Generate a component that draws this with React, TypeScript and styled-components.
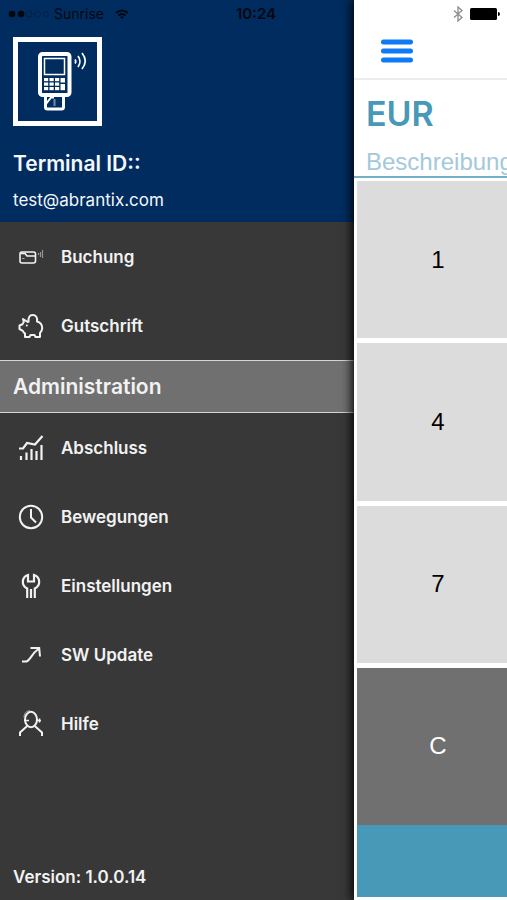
import React from "react";
import styled, { createGlobalStyle } from "styled-components";

const GlobalStyle = createGlobalStyle`
  *, *::before, *::after { box-sizing: border-box; }
  body { margin: 0; background: #ffffff; font-family: Inter, "Liberation Sans", sans-serif; }
  button, input { font: inherit; border: 0; border-radius: 0; margin: 0; padding: 0; }
  h1, h2, p, ul { margin: 0; padding: 0; }
  ul { list-style: none; }
`;

const Screen = styled.div`
  display: grid;
  grid-template-columns: minmax(0, 1fr) 153px;
  min-height: 100vh;
  overflow: hidden;
`;

const Drawer = styled.aside`
  display: flex;
  flex-direction: column;
  background: #383838;
  color: #f2f2f2;
`;

const Profile = styled.header`
  height: 222px;
  padding: 0 13px;
  background: #002c5f;
  color: #f4f7fb;
`;

const Status = styled.div`
  display: flex;
  align-items: center;
  height: 27px;
  color: #05080e;
  font-size: 14px;
`;

const Carrier = styled(Status)`
  justify-content: space-between;
  margin: 0 65px 10px -5px;
`;

const Signal = styled.span`
  display: flex;
  align-items: center;
  gap: 5px;
`;

const Time = styled.time`
  font-size: 15px;
  font-weight: 600;
`;

const Logo = styled.svg`
  display: block;
  width: 89px;
  height: 89px;
`;

const Terminal = styled.h1`
  margin-top: 24px;
  font-size: 21px;
  line-height: 28px;
  font-weight: 600;
`;

const Email = styled.p`
  margin-top: 10px;
  font-size: 17px;
  line-height: 24px;
`;

const Item = styled.button`
  display: flex;
  align-items: center;
  gap: 16px;
  width: 100%;
  height: 69px;
  padding: 0 17px;
  background: transparent;
  color: inherit;
  font-size: 17px;
  font-weight: 600;
  text-align: left;
  cursor: pointer;
`;

const Icon = styled.svg`
  flex: none;
  width: 28px;
  height: 28px;
  fill: none;
  stroke: currentColor;
  stroke-width: 2;
`;

const Section = styled.h2`
  height: 53px;
  padding: 0 13px;
  border: solid #d4d4d4;
  border-width: 1px 0;
  background: #707070;
  font-size: 21px;
  line-height: 51px;
  font-weight: 600;
`;

const Version = styled.p`
  margin-top: auto;
  padding: 0 13px 11px;
  font-size: 17px;
  line-height: 24px;
  font-weight: 600;
`;

const Main = styled.main`
  display: flex;
  flex-direction: column;
  min-width: 0;
  background: #ffffff;
  box-shadow: -1px 0 10px 1px #000000;
  z-index: 1;
`;

const DeviceStatus = styled(Status)`
  justify-content: flex-end;
  gap: 7px;
  padding-right: 7px;
`;

const TopBar = styled.div`
  height: 53px;
  padding: 11px 26px;
  border-bottom: 2px solid #ececec;
`;

const MenuButton = styled.button`
  display: block;
  background: transparent;
  cursor: pointer;

  svg { display: block; width: 34px; height: 26px; }
`;

const Amount = styled.div`
  padding: 12px 12px 0;
  color: #4799b7;
  font-size: 34px;
  line-height: 44px;
  font-weight: 600;
`;

const Description = styled.input`
  width: 100%;
  height: 42px;
  padding: 12px 0 0 12px;
  border-bottom: 2px solid #78afc8;
  background: transparent;
  font-family: "Liberation Sans", sans-serif;
  font-size: 24px;
  outline: 0;
  border-radius: 0;

  &::placeholder { color: #a3c9da; opacity: 1; }
`;

const Keypad = styled.div`
  display: grid;
  grid-template-columns: 162px;
  grid-template-rows: repeat(4, 1fr);
  gap: 5px;
  flex: 1;
  padding: 3px 0 0 3px;
  overflow: hidden;
`;

const Key = styled.button<{ $dark?: boolean }>`
  background: ${({ $dark }) => ($dark ? "#707070" : "#dcdcdc")};
  color: ${({ $dark }) => ($dark ? "#ffffff" : "#000000")};
  font-family: "Liberation Sans", sans-serif;
  font-size: 24px;
  cursor: pointer;
`;

const Confirm = styled.button`
  height: 72px;
  margin: 0 0 3px 3px;
  background: #4898b7;
  cursor: pointer;
`;

type Entry = { label: string; icon: React.ReactNode };

const bookings: Entry[] = [
  {
    label: "Buchung",
    icon: (
      <>
        <rect x="3" y="9" width="15.500" height="11" rx="2" strokeWidth="1.600" />
        <path d="M4 10.500h4l2 2.500h8" strokeWidth="1.600" />
        <path d="M5 15.500h2.500" strokeWidth="1" opacity=".6" />
        <path d="M21.500 10v2M23.500 9v5M25.500 7v8" strokeWidth="1.200" opacity=".5" />
      </>
    ),
  },
  {
    label: "Gutschrift",
    icon: (
      <>
        <path
          d="M11.500 10.500C11 5.500 12.500 3 15.700 3s5 2.500 4.300 6.500c3.500 1 5.200 3.500 5.200 6.500 0 2.500-1 4-2.200 5v4h-4.500l-1-2h-4l-1 2H8v-3.500c-1.200-.6-1.800-1.500-2.200-2.700L2.500 17v-3.500l3-1.200c.3-1 .7-1.600 1.300-2.200L6 7l5.500 3.500"
          strokeLinejoin="round"
        />
        <circle cx="9.800" cy="13.500" r="1" fill="currentColor" stroke="none" />
      </>
    ),
  },
];

const administration: Entry[] = [
  {
    label: "Abschluss",
    icon: <path d="M2 14.500h4l4-5.500 8 1.500 7.500-8.500M4 22v4M9.500 18.500V26M14.500 15v11M19.500 17v9M24.500 11v15" strokeWidth="2.200" />,
  },
  {
    label: "Bewegungen",
    icon: (
      <>
        <circle cx="14" cy="14" r="11.200" />
        <path d="M14 6v8.500l5 5" />
      </>
    ),
  },
  {
    label: "Einstellungen",
    icon: <path d="M10.200 26v-9.500C4 13.500 4.500 5 11 3v6.500h6V3c6.500 2 7 10.500.8 13.500V26M14 17v9" strokeWidth="2.200" />,
  },
  {
    label: "SW Update",
    icon: <path d="M5 20.500h4.500C13.500 19.500 14 13 22 7.500M13.500 7h8.700l.8 8.500" />,
  },
  {
    label: "Hilfe",
    icon: (
      <>
        <ellipse cx="14" cy="9.500" rx="6" ry="7.700" />
        <path d="M3 26v-3.500l7.200-6.500M25 26v-3.500l-7.200-6.500" />
        <path d="M7 10.500h5M20 10.500h4M22.500 8.500v4" strokeWidth="1.500" />
        <path d="M7 7.500C7 3.500 9 .8 13 .8" strokeWidth="1" opacity=".6" />
      </>
    ),
  },
];

const Menu = ({ entries }: { entries: Entry[] }) => (
  <ul>
    {entries.map(({ label, icon }) => (
      <li key={label}>
        <Item type="button">
          <Icon viewBox="0 0 28 28" aria-hidden="true">{icon}</Icon>
          {label}
        </Item>
      </li>
    ))}
  </ul>
);

const TerminalLogo = () => (
  <Logo viewBox="0 0 89 89" fill="none" stroke="#ffffff" role="img" aria-label="Terminal">
    <rect x="2.500" y="2.500" width="84" height="84" strokeWidth="5" />
    <rect x="27" y="17" width="29.500" height="41" rx="2.500" strokeWidth="4" />
    <rect x="31.500" y="21.500" width="20" height="16" strokeWidth="1.500" />
    <g fill="#ffffff" stroke="none">
      {[41, 45.500, 50].map((y) =>
        [31, 36.500, 42].map((x) => <rect key={`${x}-${y}`} x={x} y={y} width="4.200" height="3.200" />)
      )}
      <rect x="47.500" y="41" width="4.500" height="4.500" />
      <rect x="47.500" y="47" width="4.500" height="6.200" />
    </g>
    <path d="M32.500 60v10q0 2 2 2h14q2 0 2-2V60" strokeWidth="3" />
    <path d="M33 67l5-6.500h3" strokeWidth="2" />
    <path d="M41.500 62v7" strokeWidth="2" opacity=".45" />
    <path d="M62 22.500q1.500 2 0 4M65 19q4 5.500 0 11M69 16q6.500 8 0 16" strokeWidth="1.700" />
  </Logo>
);

export default function App() {
  return (
    <>
      <GlobalStyle />
      <Screen>
        <Drawer>
          <Profile>
            <Carrier>
              <Signal>
                <svg width="41" height="8" viewBox="0 0 41 8" aria-hidden="true">
                  <circle cx="4" cy="4" r="3.300" fill="currentColor" />
                  <circle cx="13" cy="4" r="3.300" fill="currentColor" />
                  <g fill="none" stroke="currentColor" opacity=".3">
                    <circle cx="21" cy="4" r="3" />
                    <circle cx="29.500" cy="4" r="3" />
                    <circle cx="38" cy="4" r="2.500" />
                  </g>
                </svg>
                Sunrise
                <svg width="20" height="10" viewBox="-6 0 20 10" fill="none" stroke="currentColor" strokeWidth="2" aria-label="WLAN">
                  <path d="M1 4q6-5 12 0M3.500 6.500q3.500-3 7 0" />
                  <path d="M5 8q2-1.500 4 0L7 10z" fill="currentColor" stroke="none" />
                </svg>
              </Signal>
              <Time>10:24</Time>
            </Carrier>
            <TerminalLogo />
            <Terminal>Terminal ID::</Terminal>
            <Email>test@abrantix.com</Email>
          </Profile>
          <nav aria-label="Menü">
            <Menu entries={bookings} />
            <Section>Administration</Section>
            <Menu entries={administration} />
          </nav>
          <Version>Version: 1.0.0.14</Version>
        </Drawer>
        <Main>
          <DeviceStatus>
            <svg width="10" height="16" viewBox="0 0 10 16" fill="none" stroke="#8c8c8c" strokeWidth="1.300" aria-label="Bluetooth">
              <path d="M1 4.500l8 7L5 15V1l4 3.500-8 7" />
            </svg>
            <svg width="30" height="12" viewBox="0 0 30 12" fill="#000000" aria-label="Akku">
              <rect width="27" height="12" rx="1.500" />
              <path d="M28 4q2 0 2 2t-2 2z" />
            </svg>
          </DeviceStatus>
          <TopBar>
            <MenuButton type="button" aria-label="Menü schliessen">
              <svg viewBox="0 0 34 26" stroke="#0f7af5" strokeWidth="5" strokeLinecap="round">
                <path d="M3.500 4h27M3.500 13h27M3.500 22h27" />
              </svg>
            </MenuButton>
          </TopBar>
          <Amount>EUR</Amount>
          <Description type="text" aria-label="Beschreibung" placeholder="Beschreibung" />
          <Keypad>
            <Key type="button">1</Key>
            <Key type="button">4</Key>
            <Key type="button">7</Key>
            <Key type="button" $dark>C</Key>
          </Keypad>
          <Confirm type="button" aria-label="Bestätigen" />
        </Main>
      </Screen>
    </>
  );
}
